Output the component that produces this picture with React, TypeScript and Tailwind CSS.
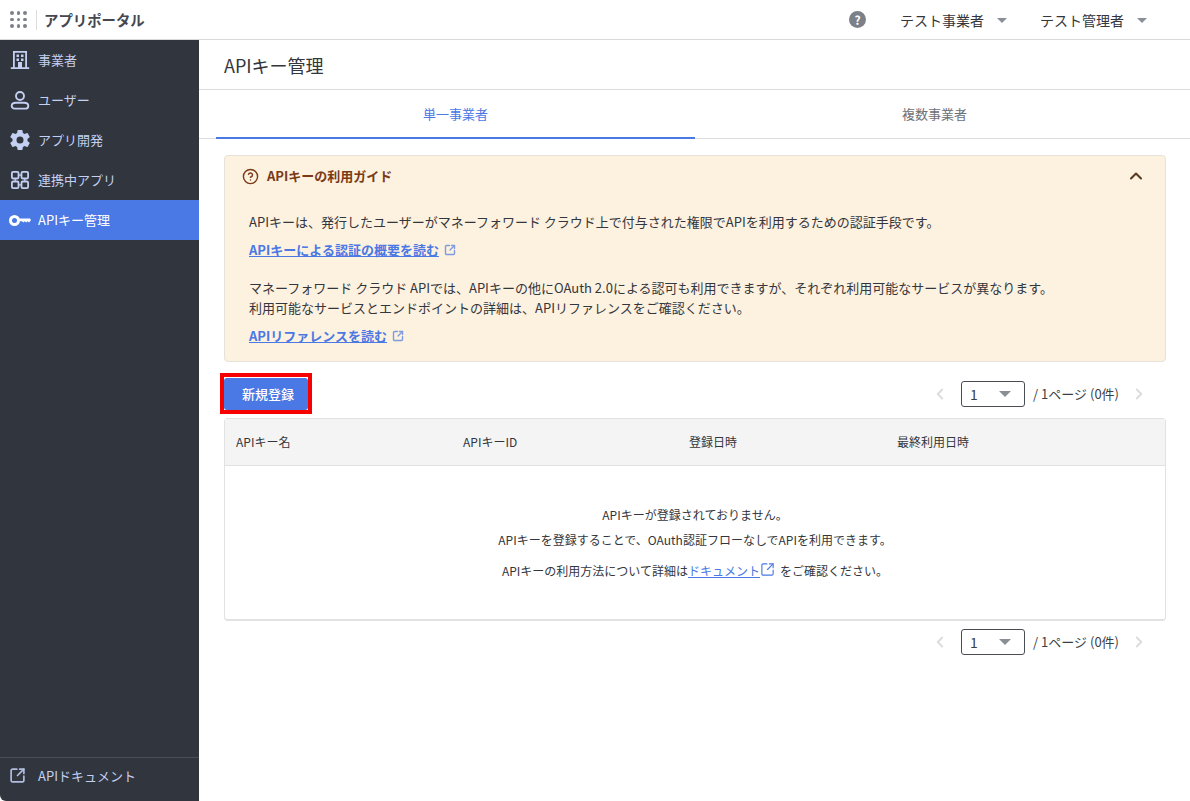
import { ChevronLeft, ChevronRight, ChevronUp, CircleHelp, SquareArrowOutUpRight } from "lucide-react"
import type { ReactNode } from "react"

function Caret({ className = "" }: { className?: string }) {
  return <span className={`w-0 h-0 border-x-[5px] border-x-transparent border-t-[5px] border-t-[#8a8e96] ${className}`} />
}

function BuildingIcon() {
  return (
    <svg viewBox="0 0 20 20" className="w-5 h-5 shrink-0" fill="#c3d0f2">
      <path fillRule="evenodd" d="M3 1h14v16.200h2.200V19H.8v-1.800H3V1Zm1.800 1.800v14.400H8V12h4v5.200h3.200V2.800H4.800ZM6.500 4.500H9V7H6.500V4.500Zm4.500 0h2.500V7H11V4.500ZM6.500 8.500H9V11H6.500V8.500Zm4.500 0h2.500V11H11V8.500Z" />
    </svg>
  )
}

function UserIcon() {
  return (
    <svg viewBox="0 0 20 20" className="w-5 h-5 shrink-0" fill="none" stroke="#c3d0f2" strokeWidth="1.9">
      <circle cx="10" cy="6" r="4" />
      <path d="M6 12.800h8c2.600 0 4.300 1.300 4.300 3.100 0 1.700-1.400 2.700-3 2.700H4.700c-1.600 0-3-1-3-2.700 0-1.800 1.700-3.100 4.300-3.100Z" />
    </svg>
  )
}

function GearIcon() {
  return (
    <svg viewBox="0 0 24 24" className="w-6 h-6 shrink-0" fill="#c3d0f2">
      <path d="M19.43 12.98c.04-.32.07-.64.07-.98s-.03-.66-.07-.98l2.11-1.65a.5.5 0 0 0 .12-.64l-2-3.46a.5.5 0 0 0-.61-.22l-2.49 1a7.3 7.300 0 0 0-1.690-.98l-.38-2.650A.49.49 0 0 0 14 2h-4a.49.49 0 0 0-.49.420l-.38 2.650c-.61.250-1.170.590-1.690.980l-2.490-1a.49.49 0 0 0-.61.220l-2 3.460a.49.49 0 0 0 .12.640l2.110 1.650c-.04.320-.07.650-.07.980s.03.660.07.980l-2.110 1.650a.5.500 0 0 0-.12.640l2 3.460c.12.220.39.300.61.220l2.490-1c.52.400 1.080.730 1.690.980l.38 2.650c.03.240.24.420.49.420h4c.25 0 .46-.18.49-.42l.38-2.650c.61-.25 1.170-.59 1.690-.98l2.490 1c.23.090.49 0 .61-.22l2-3.460a.5.500 0 0 0-.12-.64l-2.110-1.650ZM12 15.500a3.500 3.500 0 1 1 0-7 3.500 3.500 0 0 1 0 7Z" />
    </svg>
  )
}

function AppsIcon() {
  return (
    <svg viewBox="0 0 20 20" className="w-5 h-5 shrink-0" fill="none" stroke="#c3d0f2" strokeWidth="1.800">
      <rect x="1.900" y="1.900" width="6.600" height="6.600" rx="1.200" />
      <rect x="11.500" y="1.900" width="6.600" height="6.600" rx="1.200" />
      <rect x="1.900" y="11.500" width="6.600" height="6.600" rx="1.200" />
      <rect x="11.500" y="11.500" width="6.600" height="6.600" rx="1.200" />
      <path d="M8.500 5.200h3M8.500 14.800h3M5.200 8.500v3M14.800 8.500v3" strokeWidth="1.200" />
    </svg>
  )
}

function KeyIcon() {
  return (
    <svg viewBox="0 0 22 11" className="w-[22px] h-[11px] shrink-0" fill="white">
      <circle cx="5.500" cy="5.500" r="4" fill="none" stroke="white" strokeWidth="3" />
      <path d="M10 3.600h11l1 1.600-2 2.300-1.400-1.200-1.400 1.200-1.400-1.200-1.400 1.200-1.400-1.200H10Z" />
    </svg>
  )
}

function NavItem({ icon, label, active }: { icon: ReactNode; label: string; active?: boolean }) {
  return (
    <div className={`h-10 flex items-center pl-[10px] text-[13px] ${active ? "bg-[#4a78e4] text-white" : "text-[#c3d0f2]"}`}>
      <span className="w-5 flex justify-center shrink-0">{icon}</span>
      <span className="ml-2">{label}</span>
    </div>
  )
}

function Pager() {
  return (
    <div className="flex items-center text-[13px] text-[#3b3f46] pr-[18px]">
      <ChevronLeft className="w-[18px] h-[18px] text-[#dcdcdc] mr-3" strokeWidth={2.500} />
      <div className="w-16 h-[26px] border border-[#4a4d52] rounded-[3px] flex items-center justify-between pl-2 pr-[13px] text-sm">
        <span>1</span>
        <Caret className="border-x-[6px] border-t-[6px]" />
      </div>
      <span className="ml-2 mr-[11px]">/ 1ページ (0件)</span>
      <ChevronRight className="w-[18px] h-[18px] text-[#dcdcdc]" strokeWidth={2.500} />
    </div>
  )
}

export default function App() {
  return (
    <div className="w-[1190px] h-[801px] overflow-hidden flex flex-col bg-white text-[#33363c] font-['Noto_Sans_CJK_JP','Noto_Sans',sans-serif]">
      <header className="h-10 shrink-0 flex items-center border-b border-[#d9d9d9]">
        <div className="grid grid-cols-3 gap-[3px] ml-[10px] w-[17px]">
          {Array.from({ length: 9 }).map((_, i) => (
            <span key={i} className="w-[3.5px] h-[3.5px] rounded-full bg-[#7c8089]" />
          ))}
        </div>
        <div className="w-px h-5 bg-[#dddddd] ml-[9px]" />
        <div className="ml-[7px] text-[14.4px] font-bold text-[#45484e]">アプリポータル</div>
        <div className="ml-auto flex items-center text-sm pr-[43px]">
          <span className="w-[17px] h-[17px] rounded-full bg-[#7c8089] text-white text-xs font-bold flex items-center justify-center">?</span>
          <span className="ml-[34px]">テスト事業者</span>
          <Caret className="ml-[13px] mt-px" />
          <span className="ml-[33px]">テスト管理者</span>
          <Caret className="ml-[13px] mt-px" />
        </div>
      </header>

      <div className="flex flex-1 min-h-0">
        <aside className="w-[199px] shrink-0 bg-[#31353d] flex flex-col rounded-bl-md">
          <NavItem icon={<BuildingIcon />} label="事業者" />
          <NavItem icon={<UserIcon />} label="ユーザー" />
          <NavItem icon={<GearIcon />} label="アプリ開発" />
          <NavItem icon={<AppsIcon />} label="連携中アプリ" />
          <NavItem icon={<KeyIcon />} label="APIキー管理" active />
          <div className="mt-auto h-[44px] pb-2 border-t border-[#4a4e56] flex items-center pl-[9px] text-[13px] text-[#c3d0f2]">
            <span className="w-4 flex justify-center">
              <SquareArrowOutUpRight className="w-[17px] h-[17px] shrink-0 text-[#b0bce0]" strokeWidth={2.400} />
            </span>
            <span className="ml-[13px]">APIドキュメント</span>
          </div>
        </aside>

        <main className="flex-1 min-w-0">
          <div className="h-[50px] border-b border-[#dddddd] flex items-center pl-[25px] text-lg">APIキー管理</div>

          <div className="h-[49px] border-b border-[#dddddd] flex pl-[17px] pr-[16px] text-[13px]">
            <div className="flex-1 flex items-center justify-center text-[#4a78e4] border-b-2 border-[#4a78e4] h-[49px]">単一事業者</div>
            <div className="flex-1 flex items-center justify-center text-[#6d7076]">複数事業者</div>
          </div>

          <div className="pl-[25px] pr-[24px] pt-4">
            <section className="h-[207px] bg-[#fdf1e0] border border-[#e6e2da] rounded-[4px] text-[13px]">
              <div className="h-10 flex items-center pl-[17px] pr-[19px] text-[#7a3a16] font-bold">
                <CircleHelp className="w-[17px] h-[17px]" strokeWidth={2} />
                <span className="ml-2">APIキーの利用ガイド</span>
                <ChevronUp className="w-5 h-5 ml-auto text-[#5b3a22]" strokeWidth={2.500} />
              </div>
              <div className="pl-6 pt-4">
                <p className="leading-5">APIキーは、発行したユーザーがマネーフォワード クラウド上で付与された権限でAPIを利用するための認証手段です。</p>
                <p className="leading-5 mt-2 flex items-center text-[#4a78e4] font-bold">
                  <span className="underline">APIキーによる認証の概要を読む</span>
                  <SquareArrowOutUpRight className="w-3 h-3 ml-[5px] opacity-70" strokeWidth={2.800} />
                </p>
                <p className="leading-5 mt-[18px]">マネーフォワード クラウド APIでは、APIキーの他にOAuth 2.0による認可も利用できますが、それぞれ利用可能なサービスが異なります。</p>
                <p className="leading-5">利用可能なサービスとエンドポイントの詳細は、APIリファレンスをご確認ください。</p>
                <p className="leading-5 mt-2 flex items-center text-[#4a78e4] font-bold">
                  <span className="underline">APIリファレンスを読む</span>
                  <SquareArrowOutUpRight className="w-3 h-3 ml-[5px] opacity-70" strokeWidth={2.800} />
                </p>
              </div>
            </section>

            <div className="h-[32px] mt-[16px] flex items-center justify-between">
              <div className="relative w-[84px] h-8">
                <button className="w-full h-full pl-1 bg-[#4a78e4] text-white text-[13px] font-medium rounded-[3px]">新規登録</button>
                <span className="absolute -left-1 -right-1 -top-[5px] -bottom-1 border-4 border-[#f60000]" />
              </div>
              <Pager />
            </div>

            <div className="mt-2 h-[203px] border border-[#e2e2e2] border-b-2 rounded-[4px] text-xs flex flex-col">
              <div className="h-[47px] shrink-0 bg-[#f4f4f4] border-b border-[#e2e2e2] grid grid-cols-[227px_226px_208px_1fr] items-center pl-[11px]">
                <span>APIキー名</span>
                <span>APIキーID</span>
                <span>登録日時</span>
                <span>最終利用日時</span>
              </div>
              <div className="flex-1 flex flex-col items-center pt-[39px]">
                <p className="leading-5">APIキーが登録されておりません。</p>
                <p className="leading-5 mt-[5px]">APIキーを登録することで、OAuth認証フローなしでAPIを利用できます。</p>
                <p className="leading-5 mt-[11px] flex items-center">
                  APIキーの利用方法について詳細は
                  <span className="text-[#4a78e4] underline">ドキュメント</span>
                  <SquareArrowOutUpRight className="w-[15px] h-[15px] text-[#4a78e4] mr-[5px] -mt-1" strokeWidth={1.800} />
                  をご確認ください。
                </p>
              </div>
            </div>

            <div className="h-[32px] mt-[5px] flex items-center justify-end">
              <Pager />
            </div>
          </div>
        </main>
      </div>
    </div>
  )
}
